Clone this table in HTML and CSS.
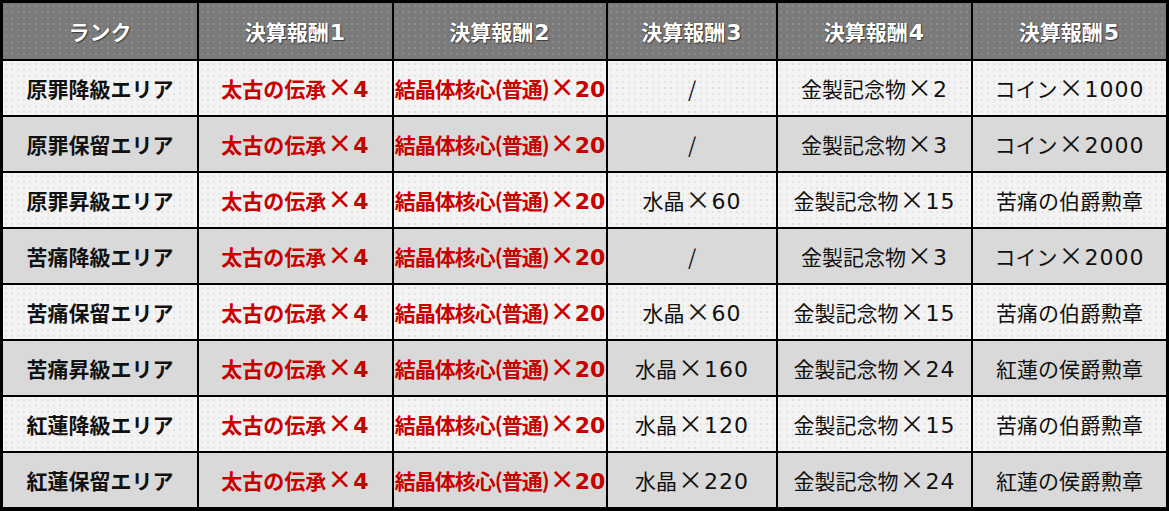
FILE: index.html
```html
<!DOCTYPE html>
<html lang="ja">
<head>
<meta charset="utf-8">
<link rel="stylesheet" href="styles.css">
</head>
<body>
<div class="table">
  <div class="cell head">ランク</div>
  <div class="cell head">決算報酬<span class="n">1</span></div>
  <div class="cell head">決算報酬<span class="n">2</span></div>
  <div class="cell head">決算報酬<span class="n">3</span></div>
  <div class="cell head">決算報酬<span class="n">4</span></div>
  <div class="cell head">決算報酬<span class="n">5</span></div>

  <div class="cell odd rank">原罪降級エリア</div>
  <div class="cell odd red">太古の伝承<span class="x">×</span><span class="n">4</span></div>
  <div class="cell odd red tight">結晶体核心(普通)<span class="x">×</span><span class="n">20</span></div>
  <div class="cell odd">/</div>
  <div class="cell odd">金製記念物<span class="x">×</span><span class="n">2</span></div>
  <div class="cell odd">コイン<span class="x">×</span><span class="n">1000</span></div>

  <div class="cell even rank">原罪保留エリア</div>
  <div class="cell even red">太古の伝承<span class="x">×</span><span class="n">4</span></div>
  <div class="cell even red tight">結晶体核心(普通)<span class="x">×</span><span class="n">20</span></div>
  <div class="cell even">/</div>
  <div class="cell even">金製記念物<span class="x">×</span><span class="n">3</span></div>
  <div class="cell even">コイン<span class="x">×</span><span class="n">2000</span></div>

  <div class="cell odd rank">原罪昇級エリア</div>
  <div class="cell odd red">太古の伝承<span class="x">×</span><span class="n">4</span></div>
  <div class="cell odd red tight">結晶体核心(普通)<span class="x">×</span><span class="n">20</span></div>
  <div class="cell odd">水晶<span class="x">×</span><span class="n">60</span></div>
  <div class="cell odd">金製記念物<span class="x">×</span><span class="n">15</span></div>
  <div class="cell odd">苦痛の伯爵勲章</div>

  <div class="cell even rank">苦痛降級エリア</div>
  <div class="cell even red">太古の伝承<span class="x">×</span><span class="n">4</span></div>
  <div class="cell even red tight">結晶体核心(普通)<span class="x">×</span><span class="n">20</span></div>
  <div class="cell even">/</div>
  <div class="cell even">金製記念物<span class="x">×</span><span class="n">3</span></div>
  <div class="cell even">コイン<span class="x">×</span><span class="n">2000</span></div>

  <div class="cell odd rank">苦痛保留エリア</div>
  <div class="cell odd red">太古の伝承<span class="x">×</span><span class="n">4</span></div>
  <div class="cell odd red tight">結晶体核心(普通)<span class="x">×</span><span class="n">20</span></div>
  <div class="cell odd">水晶<span class="x">×</span><span class="n">60</span></div>
  <div class="cell odd">金製記念物<span class="x">×</span><span class="n">15</span></div>
  <div class="cell odd">苦痛の伯爵勲章</div>

  <div class="cell even rank">苦痛昇級エリア</div>
  <div class="cell even red">太古の伝承<span class="x">×</span><span class="n">4</span></div>
  <div class="cell even red tight">結晶体核心(普通)<span class="x">×</span><span class="n">20</span></div>
  <div class="cell even">水晶<span class="x">×</span><span class="n">160</span></div>
  <div class="cell even">金製記念物<span class="x">×</span><span class="n">24</span></div>
  <div class="cell even">紅蓮の侯爵勲章</div>

  <div class="cell odd rank">紅蓮降級エリア</div>
  <div class="cell odd red">太古の伝承<span class="x">×</span><span class="n">4</span></div>
  <div class="cell odd red tight">結晶体核心(普通)<span class="x">×</span><span class="n">20</span></div>
  <div class="cell odd">水晶<span class="x">×</span><span class="n">120</span></div>
  <div class="cell odd">金製記念物<span class="x">×</span><span class="n">15</span></div>
  <div class="cell odd">苦痛の伯爵勲章</div>

  <div class="cell even rank">紅蓮保留エリア</div>
  <div class="cell even red">太古の伝承<span class="x">×</span><span class="n">4</span></div>
  <div class="cell even red tight">結晶体核心(普通)<span class="x">×</span><span class="n">20</span></div>
  <div class="cell even">水晶<span class="x">×</span><span class="n">220</span></div>
  <div class="cell even">金製記念物<span class="x">×</span><span class="n">24</span></div>
  <div class="cell even">紅蓮の侯爵勲章</div>
</div>
</body>
</html>
```
FILE: styles.css
```css
html, body {
  margin: 0;
  padding: 0;
  background: #ffffff;
}
.table {
  box-sizing: border-box;
  width: 1169px;
  height: 511px;
  border: 3px solid #000;
  border-bottom-width: 4px;
  background: #000;
  display: grid;
  grid-template-columns: 194px 193px 212px 168px 193px 193px;
  grid-template-rows: 56px repeat(8, 54px);
  column-gap: 2px;
  row-gap: 2px;
  font-family: "Noto Sans CJK JP", "Noto Sans", sans-serif;
  font-size: 21px;
  color: #111;
}
.cell {
  text-align: center;
  white-space: nowrap;
  background-size: 6px 6px;
  line-height: 54px;
  overflow: hidden;
}
.head {
  line-height: 56px;
  background-color: #7a7a7a;
  background-image: radial-gradient(circle, rgba(150,150,150,0.6) 0.8px, transparent 1.2px);
  color: #fff;
  font-weight: 700;
  text-shadow: 0 0 1px #333, 1px 1px 1px rgba(0,0,0,0.5);
}
.odd {
  background-color: #f3f3f3;
  background-image: radial-gradient(circle, rgba(225,225,225,0.9) 0.8px, transparent 1.2px);
}
.even {
  background-color: #d9d9d9;
}
.rank {
  font-weight: 700;
  color: #111;
}
.red {
  color: #c80000;
  font-weight: 700;
}
.tight {
  letter-spacing: -1px;
}
.x {
  font-size: 25px;
  margin: 0 1px;
  line-height: 1;
}
.n {
  font-family: "DejaVu Sans", sans-serif;
  font-size: 22px;
  letter-spacing: 1px;
  line-height: 1;
}
.tight .n {
  letter-spacing: 0;
}
.head .n {
  margin-left: 1px;
}
```
